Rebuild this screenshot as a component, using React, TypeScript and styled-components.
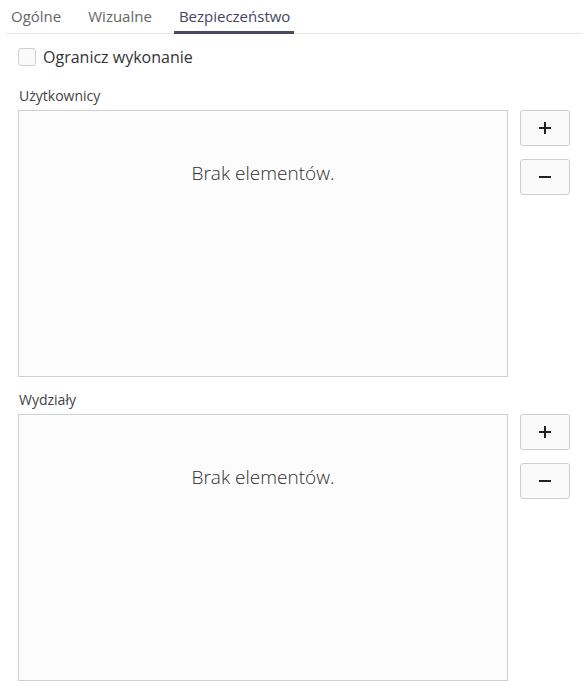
import React, { useState } from 'react';
import styled, { createGlobalStyle } from 'styled-components';

const GlobalStyle = createGlobalStyle`
  html, body {
    margin: 0;
    padding: 0;
    background: #ffffff;
    font-family: "Open Sans", "Liberation Sans", sans-serif;
    color: #333;
  }
`;

const Page = styled.div`
  padding: 0 6px;
  width: 576px;
`;

const TabBar = styled.div`
  display: flex;
  height: 34px;
  border-bottom: 1px solid #e6e6e6;
  box-sizing: border-box;
`;

const Tab = styled.div<{ $active?: boolean }>`
  padding: 6px 4px 0 5px;
  margin-right: 18px;
  font-size: 15px;
  line-height: 20px;
  color: ${({ $active }) => ($active ? '#454560' : '#666')};
  border-bottom: 3px solid ${({ $active }) => ($active ? '#4a4a5e' : 'transparent')};
  margin-bottom: -1px;
  cursor: pointer;
`;

const Content = styled.div`
  padding: 14px 0 0 12px;
`;

const CheckRow = styled.label`
  display: flex;
  align-items: center;
  gap: 7px;
  height: 18px;
  font-size: 16px;
  color: #333;
  cursor: pointer;
`;

const CheckBox = styled.span<{ $checked: boolean }>`
  width: 18px;
  height: 18px;
  box-sizing: border-box;
  border: 1px solid #d0d0d0;
  border-radius: 3px;
  background: ${({ $checked }) => ($checked ? '#4a4a5e' : '#fafafa')};
`;

const FieldLabel = styled.div<{ $gap: number }>`
  margin-top: ${({ $gap }) => $gap}px;
  padding-left: 1px;
  font-size: 14px;
  line-height: 20px;
  color: #444;
`;

const Field = styled.div`
  display: flex;
  align-items: flex-start;
  gap: 12px;
  margin-top: 4px;
`;

const ListBox = styled.div`
  width: 490px;
  height: 267px;
  box-sizing: border-box;
  border: 1px solid #cfcfcf;
  background: #fcfcfc;
  display: flex;
  justify-content: center;
`;

const Empty = styled.div`
  margin-top: 49px;
  font-size: 19px;
  font-weight: 300;
  line-height: 26px;
  color: #2e2e2e;
`;

const Buttons = styled.div`
  display: flex;
  flex-direction: column;
  gap: 13px;
`;

const SmallButton = styled.button`
  width: 50px;
  height: 36px;
  box-sizing: border-box;
  border: 1px solid #cfcfcf;
  border-radius: 3px;
  background: #fafafa;
  display: flex;
  align-items: center;
  justify-content: center;
  padding: 0;
  cursor: pointer;
`;

const PlusIcon = () => (
  <svg width="14" height="14" viewBox="0 0 14 14">
    <path d="M7 1v12M1 7h12" stroke="#222" strokeWidth="2" />
  </svg>
);

const MinusIcon = () => (
  <svg width="14" height="14" viewBox="0 0 14 14">
    <path d="M1 7h12" stroke="#222" strokeWidth="2" />
  </svg>
);

const ListField = ({ label, gap }: { label: string; gap: number }) => (
  <>
    <FieldLabel $gap={gap}>{label}</FieldLabel>
    <Field>
      <ListBox>
        <Empty>Brak elementów.</Empty>
      </ListBox>
      <Buttons>
        <SmallButton><PlusIcon /></SmallButton>
        <SmallButton><MinusIcon /></SmallButton>
      </Buttons>
    </Field>
  </>
);

export default function App() {
  const [checked, setChecked] = useState(false);
  return (
    <Page>
      <GlobalStyle />
      <TabBar>
        <Tab>Ogólne</Tab>
        <Tab>Wizualne</Tab>
        <Tab $active>Bezpieczeństwo</Tab>
      </TabBar>
      <Content>
        <CheckRow onClick={() => setChecked(!checked)}>
          <CheckBox $checked={checked} />
          Ogranicz wykonanie
        </CheckRow>
        <ListField label="Użytkownicy" gap={20} />
        <ListField label="Wydziały" gap={13} />
      </Content>
    </Page>
  );
}
